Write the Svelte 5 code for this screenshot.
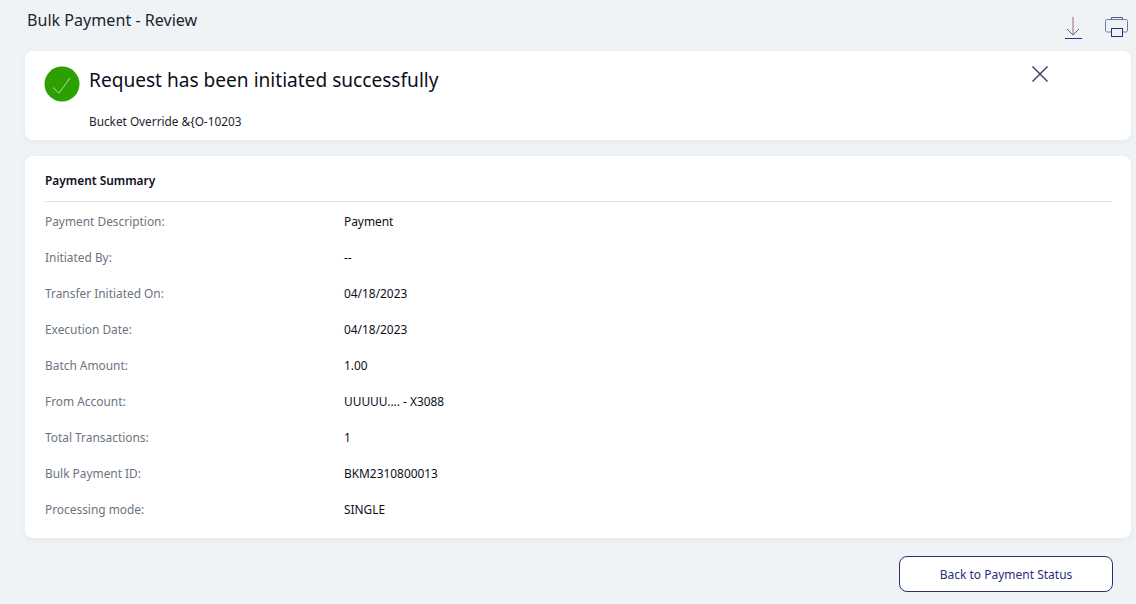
<script>
  const rows = [
    ['Payment Description:', 'Payment'],
    ['Initiated By:', '--'],
    ['Transfer Initiated On:', '04/18/2023'],
    ['Execution Date:', '04/18/2023'],
    ['Batch Amount:', '1.00'],
    ['From Account:', 'UUUUU.... - X3088'],
    ['Total Transactions:', '1'],
    ['Bulk Payment ID:', 'BKM2310800013'],
    ['Processing mode:', 'SINGLE']
  ];
</script>

<div class="page">
  <header class="top">
    <h1>Bulk Payment - Review</h1>
    <div class="tools">
      <svg width="20" height="24" viewBox="0 0 20 24" fill="none">
        <path d="M10 1V19" stroke="#a98f88" stroke-width="1.300"/>
        <path d="M4 13L10 19L16 13" stroke="#5f6290" stroke-width="1"/>
        <path d="M2 22.500H19" stroke="#2b2f77" stroke-width="1"/>
      </svg>
      <svg width="24" height="22" viewBox="0 0 24 22" fill="none">
        <path d="M7.500 3.500V1.500H18.500V3.500" stroke="#555b8e"/>
        <path d="M7.500 16H3.500C2 16 1.500 15.500 1.500 14V5.500C1.500 4 2 3.500 3.500 3.500H21.500C23 3.500 23.500 4 23.500 5.500V14C23.500 15.500 23 16 21.500 16H18.500" stroke="#6b7aa0"/>
        <rect x="7.500" y="12.500" width="11" height="8" stroke="#2b2f77"/>
      </svg>
    </div>
  </header>

  <section class="card alert">
    <div class="alert-head">
      <svg class="ok" width="36" height="36" viewBox="0 0 36 36">
        <circle cx="18" cy="18" r="17.500" fill="#2ba000"/>
        <path d="M9 21.500L15 27L26 12" fill="none" stroke="#b5dda6" stroke-width="1"/>
      </svg>
      <h2>Request has been initiated successfully</h2>
      <svg class="close" width="18" height="18" viewBox="0 0 18 18">
        <path d="M1.500 1.500L16.500 16.500M16.500 1.500L1.500 16.500" stroke="#2f3a66" stroke-width="1.400" fill="none"/>
      </svg>
    </div>
    <p>Bucket Override &amp;&#123;O-10203</p>
  </section>

  <section class="card summary">
    <h3>Payment Summary</h3>
    <dl>
      {#each rows as [label, value]}
        <div class="row">
          <dt>{label}</dt>
          <dd>{value}</dd>
        </div>
      {/each}
    </dl>
  </section>

  <footer>
    <button>Back to Payment Status</button>
  </footer>
</div>

<style>
  :global(body) {
    margin: 0;
    background: #f0f3f6;
    font-family: "Noto Sans", "Open Sans", sans-serif;
  }
  .page {
    padding: 0 5px 0 25px;
    height: 604px;
    box-sizing: border-box;
    overflow: hidden;
  }
  .top {
    display: flex;
    justify-content: space-between;
    height: 51px;
  }
  h1 {
    margin: 9px 0 0 2px;
    font-size: 16.100px;
    line-height: 22px;
    font-weight: 400;
    color: #1c2530;
  }
  .tools {
    display: flex;
    align-items: flex-start;
    gap: 21px;
    padding-top: 16px;
    padding-right: 3px;
  }
  .card {
    background: #fff;
    border-radius: 8px;
    box-shadow: 0 2px 6px rgba(60, 70, 90, 0.06);
  }
  .alert {
    height: 89px;
    padding: 15px 0 0 19px;
    box-sizing: border-box;
  }
  .alert-head {
    display: flex;
    align-items: flex-start;
    position: relative;
  }
  h2 {
    margin: 0 0 0 9px;
    font-size: 19.100px;
    line-height: 28px;
    font-weight: 400;
    color: #0b0f1a;
  }
  .close {
    position: absolute;
    left: 987px;
    top: -1px;
  }
  .alert p {
    margin: 9px 0 0 45px;
    font-size: 11.800px;
    line-height: 20px;
    color: #1c2530;
  }
  .summary {
    margin-top: 16px;
    height: 382px;
    padding: 14px 19px 0 20px;
    box-sizing: border-box;
  }
  h3 {
    margin: 0;
    height: 31px;
    line-height: 20px;
    font-size: 11.900px;
    font-weight: 600;
    color: #0b0f1a;
    border-bottom: 1px solid #e2e4e8;
  }
  dl {
    margin: 1px 0 0;
  }
  .row {
    display: grid;
    grid-template-columns: 299px 1fr;
    height: 36px;
    align-items: center;
    font-size: 11.900px;
  }
  dt {
    color: #6b7480;
  }
  dd {
    margin: 0;
    color: #0b0f1a;
  }
  footer {
    display: flex;
    justify-content: flex-end;
    padding: 18px 18px 0 0;
  }
  button {
    width: 214px;
    height: 36px;
    background: #fff;
    border: 1px solid #2b2f77;
    border-radius: 8px;
    color: #2b2f77;
    font: 400 12px "Noto Sans", sans-serif;
  }
</style>
